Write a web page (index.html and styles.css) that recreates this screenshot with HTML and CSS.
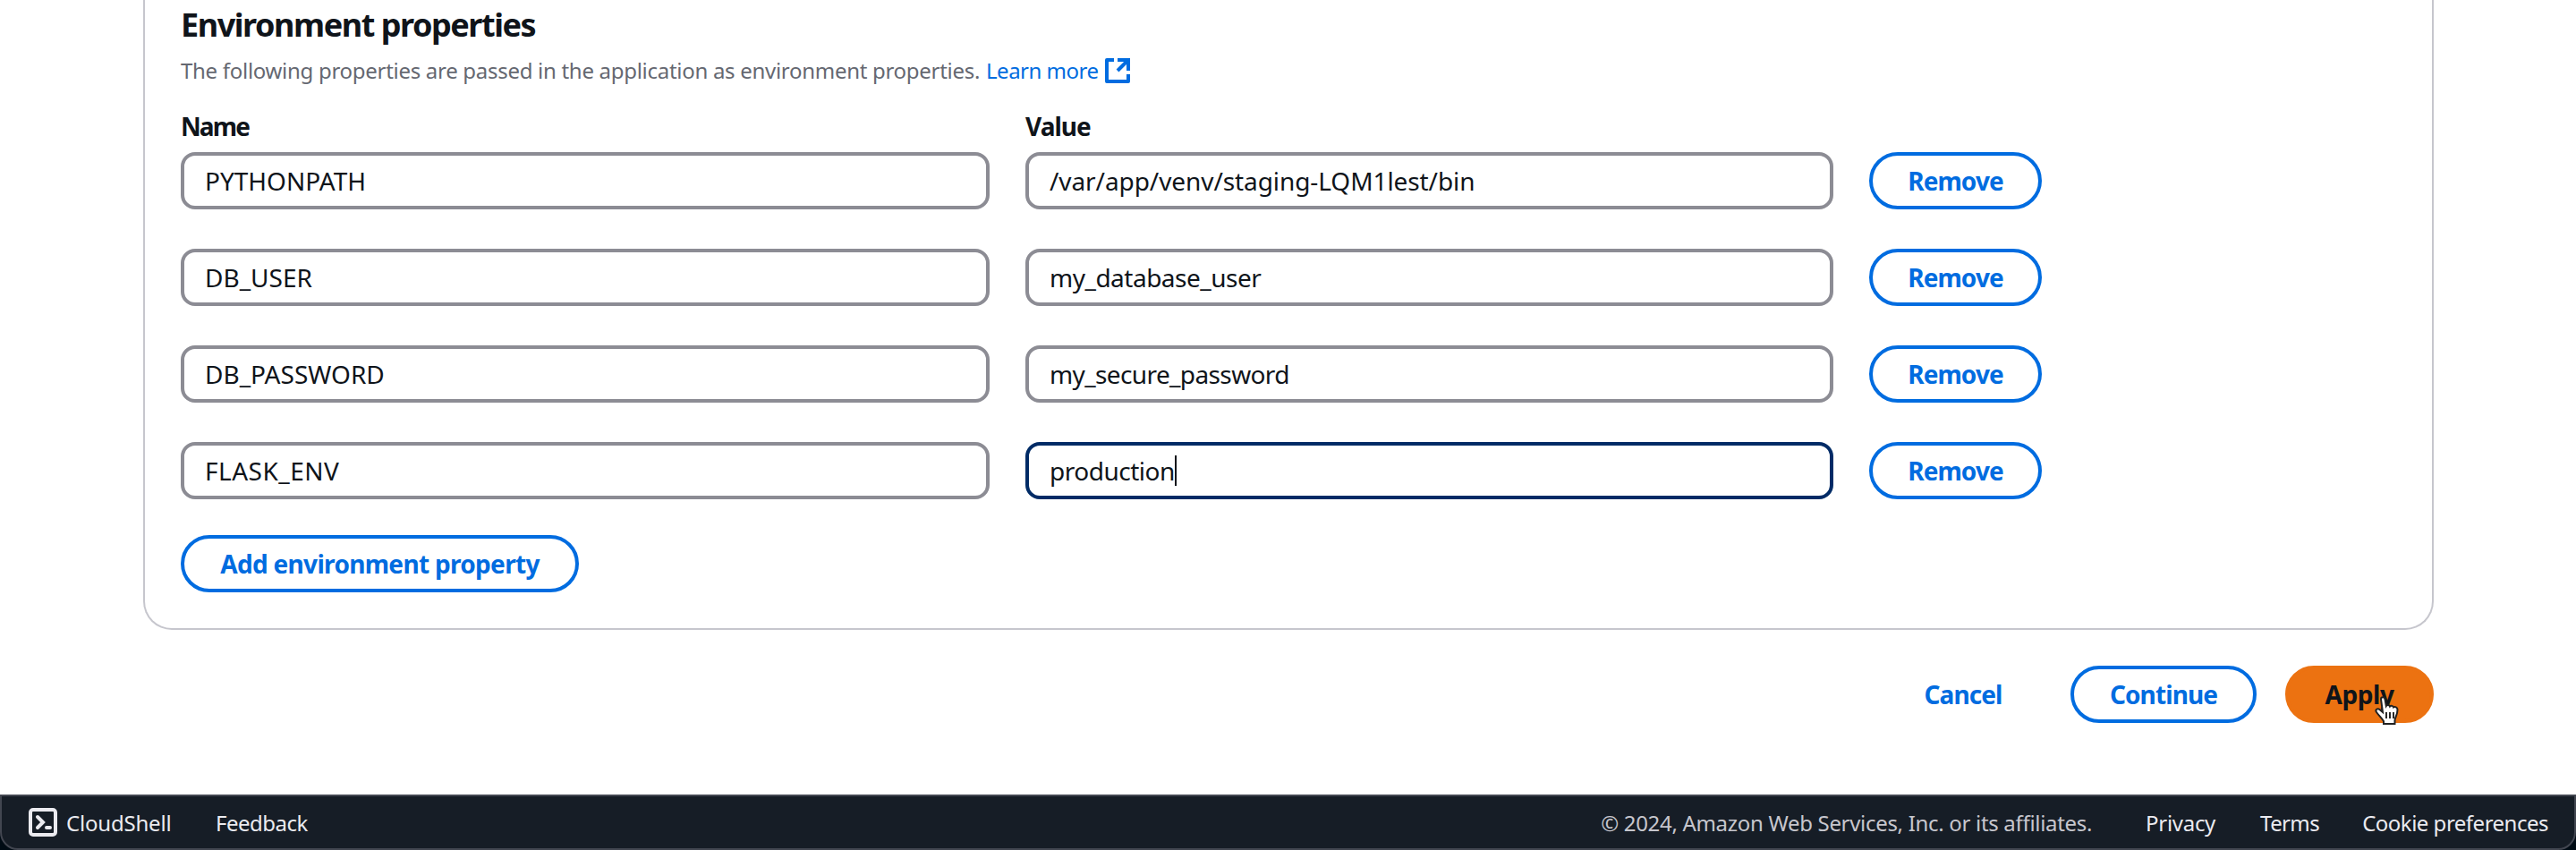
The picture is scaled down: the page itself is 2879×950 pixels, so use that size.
FILE: index.html
```html
<!DOCTYPE html>
<html lang="en">
<head>
<meta charset="utf-8">
<title>Environment properties</title>
<link rel="stylesheet" href="styles.css">
</head>
<body>
<main class="content">
  <section class="panel">
    <h2 class="panel-title">Environment properties</h2>
    <p class="panel-desc"><span>The following properties are passed in the application as environment properties.</span><a class="learn">Learn more</a><svg class="external" viewBox="0 0 28 28" fill="none" stroke="currentColor" stroke-width="4"><path d="M10 2H2v24h24v-8" stroke-linejoin="round"/><path d="M14 2h12v12M26 2L14 14"/></svg></p>
    <div class="grid labels"><span class="label-name">Name</span><span class="label-value">Value</span></div>
    <div class="rows">
      <div class="grid"><div class="input caps">PYTHONPATH</div><div class="input path">/var/app/venv/staging-LQM1lest/bin</div><button class="btn">Remove</button></div>
      <div class="grid"><div class="input caps">DB_USER</div><div class="input">my_database_user</div><button class="btn">Remove</button></div>
      <div class="grid"><div class="input caps">DB_PASSWORD</div><div class="input secure">my_secure_password</div><button class="btn">Remove</button></div>
      <div class="grid"><div class="input flask">FLASK_ENV</div><div class="input focused">production<i class="caret"></i></div><button class="btn">Remove</button></div>
    </div>
    <button class="btn btn-add">Add environment property</button>
  </section>
  <div class="actions">
    <button class="btn btn-link">Cancel</button>
    <button class="btn btn-continue">Continue</button>
    <button class="btn btn-primary">Apply
      <svg class="cursor" viewBox="0 0 30 34"><path d="M8 3.500c0-3 4-3 4.500 0l1.300 7.500c.8-1.500 3.700-1.200 4.200.5 1-1.200 3.500-.8 4 1 1.500-1 4.500-.3 4.500 2.500 0 7-3 9-3 12v4H11v-3c-2-3-5-6-8-10-1.800-2.500 1-5 3.500-3l3.500 3z" fill="#fff" stroke="#222" stroke-width="2"/><path d="M14 18v7M18 18v7M22 18v7" stroke="#111" stroke-width="1.800"/></svg>
    </button>
  </div>
</main>
<footer class="footer">
  <div class="bar">
    <svg class="shell" viewBox="0 0 32 32" fill="none" stroke="currentColor" stroke-width="4"><rect x="2" y="2" width="28" height="28" rx="3"/><path d="M10 10l6 6-6 6M20 22h4" stroke-linecap="round"/></svg>
    <span class="cloudshell">CloudShell</span>
    <span class="feedback">Feedback</span>
    <span class="copyright">© 2024, Amazon Web Services, Inc. or its affiliates.</span>
    <span class="privacy">Privacy</span>
    <span class="terms">Terms</span>
    <span class="cookies">Cookie preferences</span>
  </div>
</footer>
</body>
</html>
```
FILE: styles.css
```css
* { box-sizing: border-box; }
body {
  margin: 0;
  height: 950px;
  display: flex;
  flex-direction: column;
  overflow: hidden;
  background: #fff;
  color: #0f141a;
  font-family: "Noto Sans", "Open Sans", sans-serif;
  font-size: 28px;
}
.content { flex: 1; padding: 0 159px 0 160px; }
.panel {
  height: 704px;
  padding: 6px 40px 0;
  border: 2px solid #c6c6cd;
  border-top: 0;
  border-radius: 0 0 32px 32px;
}
.panel-title { margin: 0; font-size: 36px; line-height: 44px; letter-spacing: -1.45px; }
.panel-desc {
  display: flex;
  align-items: center;
  margin: 13px 0 0;
  font-size: 24px;
  line-height: 32px;
  letter-spacing: -.29px;
  color: #656871;
}
.learn { margin-left: 7px; letter-spacing: -.5px; color: #006ce0; }
.external { width: 28px; height: 28px; margin-left: 7px; color: #006ce0; }
.grid { display: grid; grid-template-columns: 904px 903px 193px; column-gap: 40px; }
.labels { margin-top: 28px; line-height: 36px; font-weight: 700; }
.label-name { letter-spacing: -1.9px; }
.label-value { letter-spacing: -1px; }
.rows { display: grid; row-gap: 44px; margin-top: 11px; }
.input {
  display: flex;
  align-items: center;
  height: 64px;
  padding: 0 24px 0 23px;
  border: 4px solid #8c8c94;
  border-radius: 16px;
  line-height: 56px;
  letter-spacing: -.5px;
}
.caps { letter-spacing: 0; }
.flask { letter-spacing: .5px; }
.path { letter-spacing: -.08px; }
.secure { letter-spacing: -.62px; }
.focused { border-color: #002b66; }
.caret { width: 2px; height: 34px; background: #0f141a; }
.btn {
  height: 64px;
  padding: 0;
  border: 4px solid #006ce0;
  border-radius: 32px;
  background: #fff;
  color: #006ce0;
  font: 700 28px/56px "Noto Sans", "Open Sans", sans-serif;
  letter-spacing: -.9px;
}
.btn-add { display: block; width: 445px; margin-top: 40px; letter-spacing: -.68px; }
.actions { display: flex; justify-content: flex-end; margin-top: 40px; }
.btn-link { width: 176px; margin-right: 32px; border-color: transparent; }
.btn-continue { width: 208px; margin-right: 32px; }
.btn-primary { position: relative; width: 166px; border-color: #ec7211; background: #ec7211; color: #0f141a; letter-spacing: -.4px; }
.cursor { position: absolute; left: 95px; top: 30px; width: 30px; height: 34px; }
.footer { height: 62px; background: #000b14; }
.bar {
  display: flex;
  align-items: center;
  height: 62px;
  padding: 0 29px 0 30px;
  border: 2px solid #424650;
  border-radius: 0 0 20px 20px;
  background: #161d26;
  color: #ebebf0;
  font-size: 24px;
  white-space: nowrap;
}
.shell { width: 32px; height: 32px; }
.cloudshell { width: 167px; margin-left: 10px; letter-spacing: -.2px; }
.feedback { letter-spacing: -.5px; }
.copyright { margin-left: auto; margin-right: 60px; letter-spacing: -.31px; color: #c6c6cd; }
.privacy { margin-right: 50px; letter-spacing: -.3px; }
.terms { margin-right: 48px; letter-spacing: -.6px; }
.cookies { letter-spacing: -.5px; }
```
